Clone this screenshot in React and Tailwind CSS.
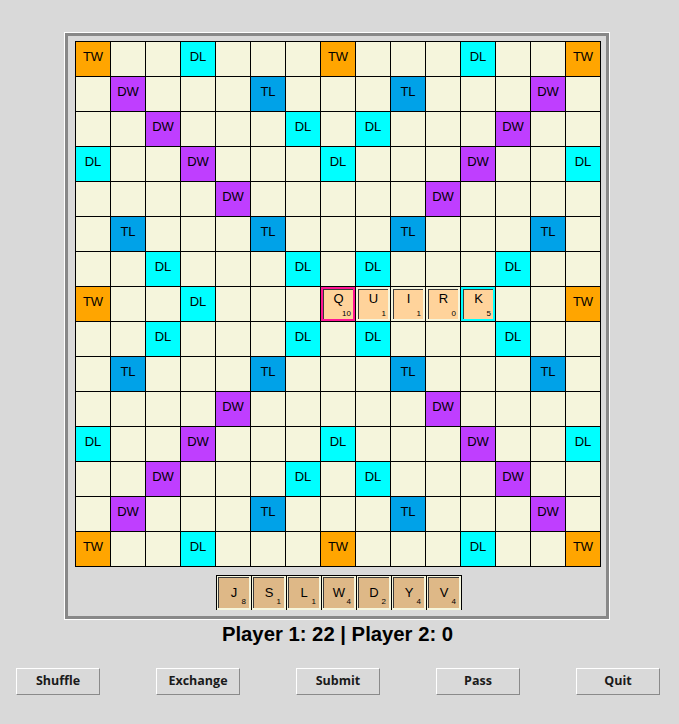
import React from "react";

const LAYOUT = [
  "T..d...T...d..T",
  ".D...t...t...D.",
  "..D...d.d...D..",
  "d..D...d...D..d",
  "....D.....D....",
  ".t...t...t...t.",
  "..d...d.d...d..",
  "T..d...S...d..T",
  "..d...d.d...d..",
  ".t...t...t...t.",
  "....D.....D....",
  "d..D...d...D..d",
  "..D...d.d...D..",
  ".D...t...t...D.",
  "T..d...T...d..T",
];

const SQ = {
  T: { bg: "bg-[#ffa500]", label: "TW" },
  D: { bg: "bg-[#bf3eff]", label: "DW" },
  t: { bg: "bg-[#00a2e8]", label: "TL" },
  d: { bg: "bg-[#00ffff]", label: "DL" },
  S: { bg: "bg-[#ff1493]", label: "" },
  ".": { bg: "bg-[#f5f5dc]", label: "" },
};

const PLACED = {
  "7,7": ["Q", 10],
  "7,8": ["U", 1],
  "7,9": ["I", 1],
  "7,10": ["R", 0],
  "7,11": ["K", 5],
};

const RACK = [
  ["J", 8],
  ["S", 1],
  ["L", 1],
  ["W", 4],
  ["D", 2],
  ["Y", 4],
  ["V", 4],
];

const font = { fontFamily: '"Liberation Sans", Arial, sans-serif' };

function BoardTile({ letter, value }) {
  return (
    <div className="w-full h-full p-[2px]">
      <div className="relative w-full h-full bg-[#ffd39b] border-t border-l border-[#3a3a3a] text-black">
        <div className="absolute left-0 right-0 top-[1px] text-center text-[13px] leading-[15px]">
          {letter}
        </div>
        <div className="absolute right-[2px] bottom-[1px] text-[8px] leading-[9px]">
          {value}
        </div>
      </div>
    </div>
  );
}

function RackTile({ letter, value }) {
  return (
    <div className="w-[35px] h-[35px] border-l border-t border-black bg-[#f5f5dc] pl-[1px] pt-[1px] pr-[2px] pb-[2px]">
      <div className="relative w-full h-full bg-[#deb887] border-t border-l border-[#3a3a3a] text-black">
        <div className="absolute left-0 right-0 top-[7px] text-center text-[13px] leading-[15px]">
          {letter}
        </div>
        <div className="absolute right-[3px] bottom-[2px] text-[8px] leading-[9px]">
          {value}
        </div>
      </div>
    </div>
  );
}

function Button({ children }) {
  return (
    <button
      className="w-[84px] h-[27px] bg-[#d9d9d9] border border-t-white border-l-white border-r-[#8a8a8a] border-b-[#8a8a8a] text-[12.5px] font-bold text-[#1a1a1a] flex items-center justify-center"
      style={{ fontFamily: '"Open Sans", "DejaVu Sans", sans-serif' }}
    >
      {children}
    </button>
  );
}

export default function App() {
  return (
    <div className="w-[679px] h-[724px] bg-[#d9d9d9] overflow-hidden" style={font}>
      <div className="pt-[32px] pl-[64px]">
        <div className="w-[546px] border border-white">
          <div className="border-[3px] border-[#888888] bg-[#d9d9d9] pl-[7px] pt-[5px] pb-[6px]">
            <div className="grid grid-cols-[repeat(15,34px)] grid-rows-[repeat(15,34px)] gap-[1px] p-[1px] bg-black w-[526px]">
              {LAYOUT.map((row, r) =>
                row.split("").map((c, col) => {
                  const sq = SQ[c];
                  const placed = PLACED[`${r},${col}`];
                  return placed ? (
                    <div key={`${r}-${col}`} className={sq.bg}>
                      <BoardTile letter={placed[0]} value={placed[1]} />
                    </div>
                  ) : (
                    <div
                      key={`${r}-${col}`}
                      className={`${sq.bg} flex items-center justify-center pb-[4px] text-[13px] text-black`}
                    >
                      {sq.label}
                    </div>
                  );
                })
              )}
            </div>
            <div className="mt-[8px] ml-[141px] flex w-[246px] h-[35px] overflow-hidden">
              {RACK.map(([l, v], i) => (
                <RackTile key={i} letter={l} value={v} />
              ))}
              <div className="w-[1px] h-[35px] bg-black" />
            </div>
          </div>
        </div>
      </div>
      <div className="w-[675px] text-center mt-[3px] text-[20.3px] leading-[23px] font-bold text-black">
        Player 1: 22 | Player 2: 0
      </div>
      <div className="flex gap-[56px] pl-[16px] mt-[22px]">
        <Button>Shuffle</Button>
        <Button>Exchange</Button>
        <Button>Submit</Button>
        <Button>Pass</Button>
        <Button>Quit</Button>
      </div>
    </div>
  );
}
